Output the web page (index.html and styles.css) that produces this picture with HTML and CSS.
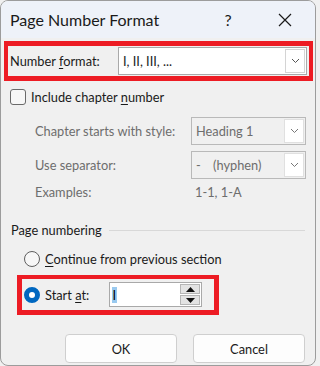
FILE: index.html
```html
<!DOCTYPE html>
<html lang="en">
<head>
<meta charset="utf-8">
<title>Page Number Format</title>
<link rel="stylesheet" href="styles.css">
</head>
<body>
<div class="window">
  <div class="titlebar">
    <span class="title">Page Number Format</span>
    <span class="tb-btn help">?</span>
    <span class="tb-btn close">
      <svg width="14" height="14" viewBox="0 0 14 14"><path d="M1 1 L13 13 M13 1 L1 13" stroke="#1a1a1a" stroke-width="1.2" fill="none"/></svg>
    </span>
  </div>

  <div class="highlight hl-format">
    <span class="label fmt-label">Number <u>f</u>ormat:</span>
    <div class="combo fmt-combo">
      <span class="combo-text">I, II, III, ...</span>
      <span class="drop"><svg width="9" height="6" viewBox="0 0 9 6"><path d="M1 1 L4.5 4.5 L8 1" stroke="#555" stroke-width="1" fill="none"/></svg></span>
    </div>
  </div>

  <div class="check-row">
    <span class="checkbox"></span>
    <span class="label">Include chapter <u>n</u>umber</span>
  </div>

  <div class="chapter-group">
    <div class="ch-row">
      <span class="label dis ch-label">Chapter starts with style:</span>
      <div class="combo dis-combo">
        <span class="combo-text dis">Heading 1</span>
        <span class="drop"><svg width="9" height="6" viewBox="0 0 9 6"><path d="M1 1 L4.5 4.5 L8 1" stroke="#777" stroke-width="1" fill="none"/></svg></span>
      </div>
    </div>
    <div class="ch-row">
      <span class="label dis ch-label">Use separator:</span>
      <div class="combo dis-combo">
        <span class="combo-text dis"><span class="hy">-</span>(hyphen)</span>
        <span class="drop"><svg width="9" height="6" viewBox="0 0 9 6"><path d="M1 1 L4.5 4.5 L8 1" stroke="#777" stroke-width="1" fill="none"/></svg></span>
      </div>
    </div>
    <div class="ex-row">
      <span class="label dis ex-label">Examples:</span>
      <span class="label dis">1-1, 1-A</span>
    </div>
  </div>

  <div class="section-head">
    <span class="label">Page numbering</span>
    <span class="rule"></span>
  </div>

  <div class="radio-row">
    <span class="radio"></span>
    <span class="label"><u>C</u>ontinue from previous section</span>
  </div>

  <div class="highlight hl-start">
    <span class="radio checked"></span>
    <span class="label start-label">Start <u>a</u>t:</span>
    <div class="spin">
      <span class="spin-text"><span class="sel">I</span></span>
      <span class="spin-btns">
        <span class="spin-btn"><svg width="9" height="5" viewBox="0 0 9 5"><path d="M4.5 0 L9 5 L0 5 Z" fill="#111"/></svg></span>
        <span class="spin-btn"><svg width="9" height="5" viewBox="0 0 9 5"><path d="M0 0 L9 0 L4.5 5 Z" fill="#111"/></svg></span>
      </span>
    </div>
  </div>

  <div class="buttons">
    <span class="btn">OK</span>
    <span class="btn">Cancel</span>
  </div>
</div>
</body>
</html>
```

FILE: styles.css
```css
* { box-sizing: border-box; }
html, body { margin: 0; padding: 0; background: #f0f0f0; }
body {
  font-family: "Lato", "Noto Sans", sans-serif;
  font-size: 12.8px;
  color: #1a1a1a;
}
.label { white-space: nowrap; }
u { text-decoration-thickness: 1px; text-underline-offset: 2px; }

.window {
  width: 316px;
  height: 366px;
  border: 1px solid #9c9c9c;
  border-radius: 8px;
  overflow: hidden;
  background: #f0f0f0;
  display: flex;
  flex-direction: column;
}

.titlebar {
  height: 37px;
  flex: none;
  background: #eef2f9;
  display: flex;
  align-items: center;
}
.title {
  font-size: 16px;
  padding-left: 9px;
  flex: 1;
  color: #1a1a1a;
  white-space: nowrap;
}
.tb-btn {
  width: 46px;
  height: 37px;
  display: flex;
  align-items: center;
  justify-content: center;
}
.help { font-size: 16px; margin-right: 11px; }
.close { margin-right: 7px; }

.highlight {
  border: 5px solid #ed1c24;
  display: flex;
  align-items: center;
}
.hl-format {
  margin: 3px 2px 0 3px;
  height: 40px;
  border-width: 5px 4px 5px 4px;
  padding-left: 2px;
  padding-right: 2px;
}
.fmt-label { width: 108px; flex: none; }

.combo {
  display: flex;
  align-items: stretch;
  border: 1px solid #a9a9a9;
  background: #fff;
}
.fmt-combo { flex: 1; height: 28px; }
.combo-text {
  flex: 1;
  display: flex;
  align-items: center;
  padding-left: 4px;
  white-space: nowrap;
}
.drop {
  width: 20px;
  flex: none;
  margin: 1px;
  background: #fff;
  border: 1px solid #d4d4d4;
  display: flex;
  align-items: center;
  justify-content: center;
}

.check-row {
  margin-top: 8px;
  padding-left: 9px;
  display: flex;
  align-items: center;
  gap: 5px;
  height: 16px;
}
.checkbox {
  width: 16px;
  height: 16px;
  border: 1px solid #6a6a6a;
  border-radius: 3px;
  background: #f7f7f7;
  flex: none;
}

.chapter-group {
  margin-top: 12px;
  padding-left: 34px;
  display: flex;
  flex-direction: column;
  gap: 6px;
}
.ch-row { display: flex; align-items: center; height: 28px; }
.ch-label { width: 156px; flex: none; }
.dis { color: #6d6d6d; }
.dis-combo {
  width: 115px;
  height: 28px;
  background: #f0f0f0;
  border-color: #b9b9b9;
}
.dis-combo .drop { border-color: #e0e0e0; }
.hy { width: 17px; display: inline-block; }
.ex-row { display: flex; align-items: center; height: 20px; margin-top: -3px; }
.ex-label { width: 160px; flex: none; }

.section-head {
  margin-top: 18px;
  padding-left: 10px;
  padding-right: 10px;
  height: 19px;
  display: flex;
  align-items: center;
}
.rule {
  flex: 1;
  height: 1px;
  background: #d8d8d8;
  margin-left: 7px;
  margin-top: 1px;
}

.radio-row {
  margin-top: 12px;
  padding-left: 23px;
  height: 16px;
  display: flex;
  align-items: center;
  gap: 5px;
}
.radio {
  width: 16px;
  height: 16px;
  border-radius: 50%;
  border: 1px solid #5f5f5f;
  background: #f7f7f7;
  flex: none;
}
.radio.checked {
  border: 5px solid #0067c0;
  background: #fff;
}

.hl-start {
  margin: 8px 0 0 16px;
  width: 202px;
  height: 40px;
  border-width: 4px 5px 5px 5px;
  padding-left: 2px;
}
.start-label { width: 64px; flex: none; margin-left: 5px; }
.spin {
  width: 93px;
  height: 25px;
  border: 1px solid #a9a9a9;
  background: #fff;
  display: flex;
}
.spin-text {
  flex: 1;
  display: flex;
  align-items: center;
  padding-left: 2px;
}
.sel {
  background: #99c9ef;
  color: #000;
  line-height: 16px;
  padding: 0 0.5px;
}
.spin-btns {
  width: 20px;
  flex: none;
  display: flex;
  flex-direction: column;
  gap: 1px;
  margin: 1px 1px 1px 0;
}
.spin-btn {
  flex: 1;
  background: #e3e3e3;
  border: 1px solid #b5b5b5;
  display: flex;
  align-items: center;
  justify-content: center;
}

.buttons {
  margin-top: 19px;
  padding-right: 10px;
  display: flex;
  justify-content: flex-end;
  gap: 16px;
}
.btn {
  width: 112px;
  height: 29px;
  border: 1px solid #cfcfcf;
  border-radius: 4px;
  background: #fdfdfd;
  display: flex;
  align-items: center;
  justify-content: center;
  color: #1a1a1a;
}
```
